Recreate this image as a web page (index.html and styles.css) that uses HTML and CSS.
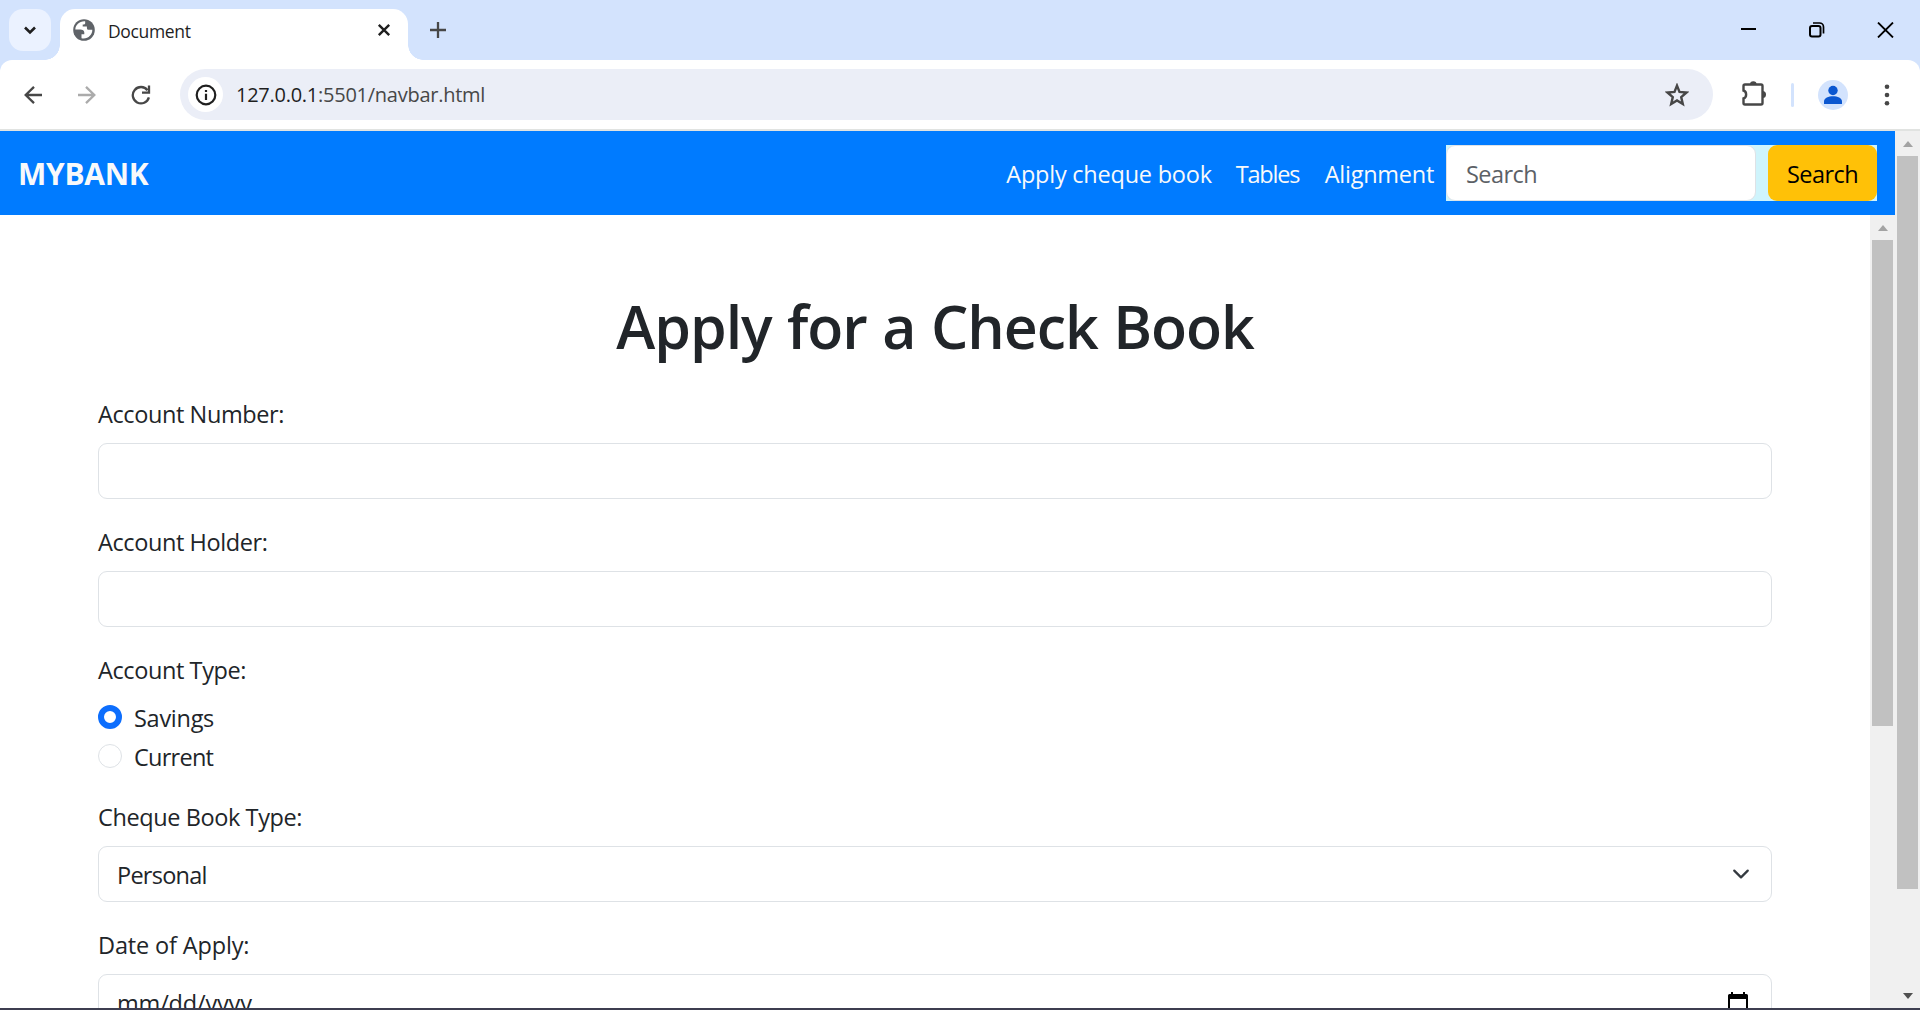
FILE: index.html
```html
<!DOCTYPE html>
<html lang="en">
<head>
<meta charset="utf-8">
<title>Document</title>
<link rel="stylesheet" href="styles.css">
</head>
<body>
<div class="window">
  <header class="tabstrip">
    <div class="tab-search"><svg width="42" height="42" viewBox="0 0 42 42"><path d="M16 18.5l5 5 5-5" fill="none" stroke="#1f1f1f" stroke-width="2.6"/></svg></div>
    <div class="tab">
      <svg class="globe" width="22" height="22" viewBox="0 0 22 22"><circle cx="11" cy="11" r="10.8" fill="#5f6368"/><path d="M12.2 2.4C6.5 2 2.5 6 2.3 10.4h5c2.4 0 4 1.2 4 3.1v1.7H8.500v4c6 1.3 11-3 10.800-8.400h-3.600c-1.400 0-1.800-1-1.800-2.400v-1H9.700V5.600c1.900 0 2.500-.6 2.500-1.600z" fill="#fff"/></svg>
      <span class="tab-title">Document</span>
      <svg class="tab-close" width="14" height="14" viewBox="0 0 14 14"><path d="M1.800 1.800l10.400 10.400M12.200 1.800L1.800 12.200" stroke="#1f1f1f" stroke-width="2.4"/></svg>
    </div>
    <svg class="new-tab" width="16" height="16" viewBox="0 0 16 16"><path d="M8 0v16M0 8h16" stroke="#474747" stroke-width="2.300"/></svg>
    <div class="controls">
      <svg width="17" height="16" viewBox="0 0 17 16"><path d="M1 7h15" stroke="#000" stroke-width="2"/></svg>
      <svg width="17" height="16" viewBox="0 0 17 16"><rect x="1" y="4" width="10.500" height="10.500" rx="2" fill="none" stroke="#000" stroke-width="2"/><path d="M4 1h6.500a4 4 0 0 1 4 4v6.500" fill="none" stroke="#000" stroke-width="1.700"/></svg>
      <svg width="17" height="16" viewBox="0 0 17 16"><path d="M1 .500l15 15M16 .500l-15 15" stroke="#000" stroke-width="1.800"/></svg>
    </div>
  </header>
  <div class="toolbar">
    <svg width="18" height="18" viewBox="0 0 18 18"><path d="M18 9H2M10 .900L1.700 9l8.300 8.100" fill="none" stroke="#474747" stroke-width="2.300"/></svg>
    <svg width="18" height="18" viewBox="0 0 18 18"><path d="M0 9h16M8 .900L16.300 9 8 17.100" fill="none" stroke="#ababab" stroke-width="2.300"/></svg>
    <svg class="reload" width="20" height="20" viewBox="0 0 20 20"><path d="M17.900 12.400A8.200 8.200 0 1 1 16.500 5.200" fill="none" stroke="#474747" stroke-width="2.300"/><path d="M18 .500v7.100h-7" fill="none" stroke="#474747" stroke-width="2.300"/></svg>
    <div class="omnibox">
      <span class="info"><svg width="22" height="22" viewBox="0 0 22 22"><circle cx="11" cy="11" r="9.300" fill="none" stroke="#1f1f1f" stroke-width="2.200"/><path d="M11 9.700v6.300M11 6v2.100" stroke="#1f1f1f" stroke-width="2.200"/></svg></span>
      <span class="url"><b>127.0.0.1</b>:5501/navbar.html</span>
      <svg class="star" width="24" height="24" viewBox="0 0 24 24"><path d="M12 2.600l2.500 6.300 7 .600-5.300 4.600 1.600 6.900L12 17.400l-5.800 3.600 1.600-6.900-5.300-4.600 7-.600z" fill="none" stroke="#474747" stroke-width="2.400"/></svg>
    </div>
    <svg class="ext" width="26" height="26" viewBox="0 0 26 26"><path d="M4.500 4.500H20a1.500 1.500 0 0 1 1.500 1.500v17a1.500 1.500 0 0 1-1.500 1.500H4A1.500 1.500 0 0 1 2.500 23v-4.500c3.500-1 3.500-7 0-8V6A1.500 1.500 0 0 1 4 4.500z" fill="none" stroke="#474747" stroke-width="2.400"/><path d="M9 4.500a3.300 3.300 0 0 1 6.600 0zM21.500 11a3.500 3.500 0 0 1 0 7z" fill="#474747"/></svg>
    <span class="divider"></span>
    <svg class="avatar" width="30" height="30" viewBox="0 0 30 30"><circle cx="15" cy="15" r="15" fill="#d3e3fd"/><circle cx="15" cy="10.500" r="4.700" fill="#0b57d0"/><path d="M6 24v-2.500c0-3.500 4.500-5.200 9-5.200s9 1.700 9 5.200V24z" fill="#0b57d0"/></svg>
    <svg class="dots" width="6" height="22" viewBox="0 0 6 22" fill="#474747"><circle cx="3" cy="2.700" r="2.300"/><circle cx="3" cy="11" r="2.300"/><circle cx="3" cy="19.300" r="2.300"/></svg>
  </div>
  <div class="viewport">
    <div class="page">
      <nav class="navbar">
        <a class="brand">MYBANK</a>
        <a class="link link-apply">Apply cheque book</a>
        <a class="link link-tables">Tables</a>
        <a class="link link-align">Alignment</a>
        <form class="search">
          <div class="search-input">Search</div>
          <div class="search-btn">Search</div>
        </form>
      </nav>
      <div class="frame">
        <main class="content">
          <h1>Apply for a Check Book</h1>
          <label class="label">Account Number:</label>
          <div class="field"></div>
          <label class="label">Account Holder:</label>
          <div class="field"></div>
          <label class="label">Account Type:</label>
          <div class="radios">
            <div class="radio"><span class="dot checked"></span><span class="savings">Savings</span></div>
            <div class="radio"><span class="dot"></span><span class="current">Current</span></div>
          </div>
          <label class="label">Cheque Book Type:</label>
          <div class="field"><span class="personal">Personal</span><svg width="18" height="18" viewBox="0 0 16 16"><path fill="none" stroke="#343a40" stroke-linecap="round" stroke-linejoin="round" stroke-width="2" d="m2 5 6 6 6-6"/></svg></div>
          <label class="label date-label">Date of Apply:</label>
          <div class="field"><span class="date">mm/dd/yyyy</span><svg class="calendar" width="20" height="24" viewBox="0 0 20 24"><path d="M3 0h2v2h10V0h2v2h1.500A1.500 1.500 0 0 1 20 3.500v18a1.500 1.500 0 0 1-1.500 1.500h-17A1.500 1.500 0 0 1 0 21.500v-18A1.500 1.500 0 0 1 1.500 2H3zM2 7v14h16V7z"/></svg></div>
        </main>
        <div class="scrollbar inner"><span class="up"></span><span class="thumb"></span></div>
      </div>
    </div>
    <div class="scrollbar outer"><span class="up"></span><span class="thumb"></span><span class="down"></span></div>
  </div>
</div>
</body>
</html>
```
FILE: styles.css
```css
* { box-sizing: border-box; }
body { margin: 0; overflow: hidden; font-family: "Open Sans", "Noto Sans", sans-serif; color: #212529; background: #fff; }
svg { display: block; flex: none; }

.window { display: flex; flex-direction: column; height: 1010px; background: #d3e3fd; border-bottom: 2px solid #3d3e50; }

/* Browser tab strip */
.tabstrip { display: flex; height: 60px; padding: 9px 7px 0 9px; flex: none; }
.tab-search { width: 42px; height: 42px; border-radius: 14px; background: #ebf2ff; }
.tab { position: relative; display: flex; align-items: center; width: 348px; height: 51px; margin-left: 9px; padding: 0 17px 9px 13px; border-radius: 15px 15px 0 0; background: #fff; }
.tab::before, .tab::after { content: ""; position: absolute; bottom: 0; width: 15px; height: 15px; }
.tab::before { right: 100%; background: radial-gradient(circle at 0 0, transparent 14.5px, #fff 15px); }
.tab::after { left: 100%; background: radial-gradient(circle at 100% 0, transparent 14.5px, #fff 15px); }
.tab-title { margin-left: 13px; padding-top: 2px; font-size: 17.5px; line-height: 24px; letter-spacing: -.35px; color: #1f1f1f; }
.tab-close { margin-left: auto; }
.new-tab { margin: 13px 0 0 22px; }
.controls { display: flex; gap: 51.500px; margin: 13px 19px 0 auto; }

/* Browser toolbar */
.toolbar { display: flex; align-items: center; height: 71px; flex: none; padding: 0 30px 0 24px; background: #fff; border-bottom: 2px solid #e1e3e1; border-radius: 12px 12px 0 0; }
.toolbar > svg + svg { margin-left: 36px; }
.toolbar > svg + .reload { margin-left: 35px; }
.omnibox { display: flex; align-items: center; width: 1533px; height: 51px; margin-left: 29px; padding: 0 24px 0 8px; border-radius: 26px; background: #ebeef7; }
.info { display: grid; place-items: center; width: 35px; height: 35px; border-radius: 50%; background: #fff; }
.url { margin-left: 13px; font-size: 20px; letter-spacing: -.26px; color: #474747; }
.url b { font-weight: 400; color: #1f1f1f; }
.star { margin-left: auto; }
.ext { margin-left: 28px; margin-top: -4px; }
.divider { width: 3px; height: 24px; margin: 0 24px; border-radius: 2px; background: #d3e3fd; }
.toolbar .avatar + .dots { margin-left: 36px; }

/* Page */
.viewport { display: flex; flex: 1; min-height: 0; background: #fff; }
.page { display: flex; flex-direction: column; flex: 1; min-width: 0; }
.navbar { display: flex; align-items: center; height: 84px; flex: none; padding: 0 18px; background: #007bff; }
.brand { margin-right: auto; padding-top: 1px; font-size: 30px; font-weight: 700; letter-spacing: -.3px; color: #f8f9fa; }
.link { padding: 2px 12px 0; font-size: 23.5px; color: #f8f9fa; white-space: nowrap; }
.link-apply { letter-spacing: -.23px; }
.link-tables { padding-right: 13.500px; letter-spacing: -1.2px; }
.link-align { letter-spacing: -.27px; }
.search { display: flex; gap: 12px; height: 56px; background: #cff4fc; font-size: 23.5px; letter-spacing: -.55px; line-height: 56px; }
.search-input { width: 310px; padding-left: 19px; border: 1px solid #dee2e6; border-radius: 9px; background: #fff; color: #5c6166; }
.search-btn { width: 109px; padding-top: 1px; text-align: center; border-radius: 9px; background: #ffc107; color: #000; }

.frame { display: flex; flex: 1; min-height: 0; }
.content { flex: 1; min-width: 0; padding: 75px 98px 0; overflow: hidden; }
h1 { margin: 0 0 33px; text-align: center; font-size: 59px; font-weight: 600; line-height: 72px; letter-spacing: -1.04px; word-spacing: 1.2px; }
.label { display: block; height: 36px; margin-bottom: 12px; font-size: 23.5px; line-height: 38px; letter-spacing: -.4px; }
.date-label { letter-spacing: -.15px; }
.field { display: flex; align-items: center; justify-content: space-between; height: 56px; margin-bottom: 24px; padding: 0 21px 0 18px; border: 1px solid #dee2e6; border-radius: 9px; font-size: 23.5px; }
.field span { padding-top: 2px; }
.personal { letter-spacing: -.75px; }
.date { letter-spacing: -.18px; }
.calendar { margin: 3px 2px 0 0; }
.radios { display: flex; flex-direction: column; gap: 3px; margin-bottom: 24px; }
.radio { display: flex; height: 36px; padding-top: 6px; gap: 12px; font-size: 23.5px; line-height: 27px; }
.dot { width: 24px; height: 24px; border: 1px solid #dee2e6; border-radius: 50%; }
.checked { border: 6px solid #0d6efd; }
.savings { letter-spacing: -.28px; }
.current { letter-spacing: -.74px; }

/* Scrollbars */
.scrollbar { display: flex; flex-direction: column; align-items: center; width: 25px; flex: none; background: #f0f0f0; }
.up, .down { width: 0; height: 0; border: 5.500px solid transparent; }
.up { margin-top: 10px; border-top: 0; border-bottom: 6px solid #a3a3a3; }
.down { margin: auto 0 9px; border-bottom: 0; border-top: 6px solid #505050; }
.thumb { width: 21px; margin-top: 9px; background: #c1c1c1; }
.inner .thumb { height: 486px; }
.outer .thumb { height: 733px; }
```
